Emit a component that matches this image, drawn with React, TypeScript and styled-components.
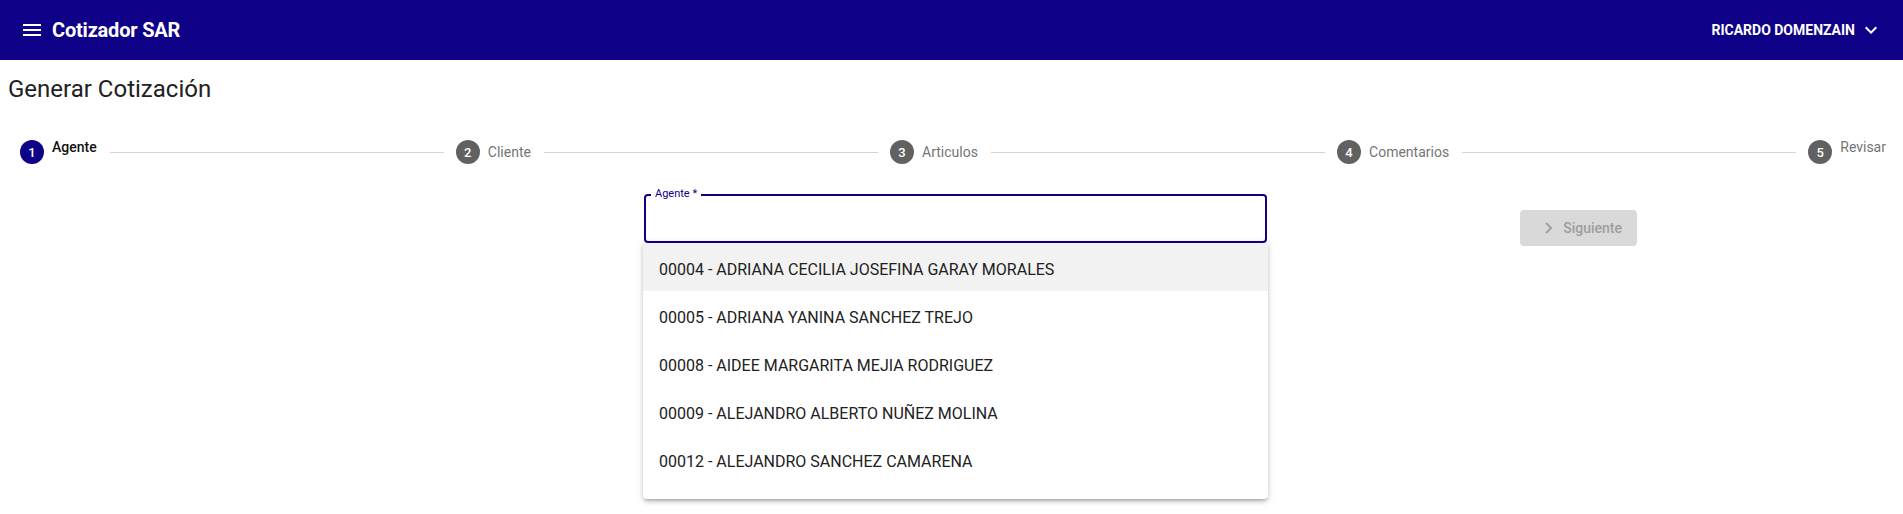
import React from 'react';
import styled, { createGlobalStyle } from 'styled-components';

const NAVY = '#0e0087';

const GlobalStyle = createGlobalStyle`
  html, body {
    margin: 0;
    padding: 0;
    background: #ffffff;
    font-family: Roboto, "Liberation Sans", Arial, sans-serif;
  }
  #root {
    min-height: 100vh;
  }
`;

interface StepData {
  number: number;
  label: string;
  active?: boolean;
  raised?: boolean;
}

const steps: StepData[] = [
  { number: 1, label: 'Agente', active: true, raised: true },
  { number: 2, label: 'Cliente' },
  { number: 3, label: 'Articulos' },
  { number: 4, label: 'Comentarios' },
  { number: 5, label: 'Revisar', raised: true },
];

const agentes = [
  '00004 - ADRIANA CECILIA JOSEFINA GARAY MORALES',
  '00005 - ADRIANA YANINA SANCHEZ TREJO',
  '00008 - AIDEE MARGARITA MEJIA RODRIGUEZ',
  '00009 - ALEJANDRO ALBERTO NUÑEZ MOLINA',
  '00012 - ALEJANDRO SANCHEZ CAMARENA',
];

const AppBar = styled.header`
  height: 60px;
  background: ${NAVY};
  color: #ffffff;
  display: flex;
  align-items: center;
  justify-content: space-between;
  padding: 0 20px;
`;

const Brand = styled.div`
  display: flex;
  align-items: center;
  gap: 8px;
`;

const BrandTitle = styled.span`
  font-size: 20px;
  font-weight: 700;
  letter-spacing: -0.2px;
`;

const UserMenu = styled.div`
  display: flex;
  align-items: center;
  gap: 4px;
  font-size: 14px;
  font-weight: 700;
  text-transform: uppercase;
`;

const Main = styled.main`
  padding: 0 4px 0 8px;
`;

const PageTitle = styled.h1`
  margin: 13px 0 0;
  font-size: 24px;
  line-height: 32px;
  font-weight: 400;
  color: #212121;
`;

const Stepper = styled.div`
  display: flex;
  align-items: center;
  margin-top: 35px;
  height: 24px;
`;

const Step = styled.div`
  display: flex;
  align-items: center;
  gap: 8px;
  height: 24px;
  padding: 0 13px 0 12px;
`;

const StepIcon = styled.span<{ $active?: boolean }>`
  width: 24px;
  height: 24px;
  border-radius: 50%;
  background: ${(p) => (p.$active ? NAVY : '#616161')};
  color: #ffffff;
  font-size: 13px;
  font-weight: 500;
  display: flex;
  align-items: center;
  justify-content: center;
  flex-shrink: 0;
`;

const StepLabel = styled.span<{ $active?: boolean; $raised?: boolean }>`
  font-size: 14px;
  line-height: ${(p) => (p.$raised ? '14px' : '20px')};
  align-self: ${(p) => (p.$raised ? 'flex-start' : 'center')};
  font-weight: ${(p) => (p.$active ? 500 : 400)};
  color: ${(p) => (p.$active ? '#111111' : '#757575')};
  white-space: nowrap;
`;

const Connector = styled.span`
  flex: 1;
  height: 1px;
  background: #d4d4d4;
`;

const FormRow = styled.div`
  display: grid;
  grid-template-columns: 636px 623px 253px 117px;
  align-items: start;
  margin-top: 30px;
`;

const Field = styled.div`
  grid-column: 2;
  position: relative;
  display: flex;
  flex-direction: column;
`;

const InputBox = styled.div`
  height: 49px;
  box-sizing: border-box;
  border: 2px solid ${NAVY};
  border-radius: 4px;
`;

const FloatingLabel = styled.span`
  position: absolute;
  top: -6px;
  left: 7px;
  padding: 0 4px;
  background: #ffffff;
  font-size: 11px;
  line-height: 12px;
  color: ${NAVY};
`;

const Listbox = styled.div`
  margin: 0 -1px;
  height: 256px;
  box-sizing: border-box;
  padding: 0 0 16px;
  background: #ffffff;
  border-radius: 0 0 4px 4px;
  box-shadow: 0 3px 3px -2px rgba(0, 0, 0, 0.2), 0 3px 4px 0 rgba(0, 0, 0, 0.14),
    0 1px 8px 0 rgba(0, 0, 0, 0.12);
`;

const Option = styled.div<{ $focused?: boolean }>`
  height: 48px;
  box-sizing: border-box;
  padding: 6px 16px 0;
  line-height: 42px;
  font-size: 16px;
  color: #212121;
  background: ${(p) => (p.$focused ? '#f2f2f2' : 'transparent')};
`;

const NextButton = styled.button`
  grid-column: 4;
  margin-top: 16px;
  height: 36px;
  display: flex;
  align-items: center;
  gap: 3px;
  padding: 0 15px 0 17px;
  border: none;
  border-radius: 4px;
  background: #d9d9d9;
  color: #9e9e9e;
  font-family: inherit;
  font-size: 14px;
  font-weight: 500;
  cursor: default;
`;

function MenuIcon() {
  return (
    <svg width="24" height="24" viewBox="0 0 24 24" fill="#ffffff">
      <path d="M3 18h18v-2H3v2zm0-5h18v-2H3v2zm0-7v2h18V6H3z" />
    </svg>
  );
}

function ExpandMoreIcon() {
  return (
    <svg width="24" height="24" viewBox="0 0 24 24" fill="#ffffff">
      <path d="M16.59 8.59L12 13.17 7.41 8.59 6 10l6 6 6-6z" />
    </svg>
  );
}

function ChevronRightIcon() {
  return (
    <svg width="24" height="24" viewBox="0 0 24 24" fill="#9e9e9e">
      <path d="M10 6L8.59 7.41 13.17 12l-4.58 4.59L10 18l6-6z" />
    </svg>
  );
}

export default function App() {
  return (
    <>
      <GlobalStyle />
      <AppBar>
        <Brand>
          <MenuIcon />
          <BrandTitle>Cotizador SAR</BrandTitle>
        </Brand>
        <UserMenu>
          Ricardo Domenzain
          <ExpandMoreIcon />
        </UserMenu>
      </AppBar>

      <Main>
        <PageTitle>Generar Cotización</PageTitle>

        <Stepper>
          {steps.map((step, i) => (
            <React.Fragment key={step.number}>
              {i > 0 && <Connector />}
              <Step>
                <StepIcon $active={step.active}>{step.number}</StepIcon>
                <StepLabel $active={step.active} $raised={step.raised}>
                  {step.label}
                </StepLabel>
              </Step>
            </React.Fragment>
          ))}
        </Stepper>

        <FormRow>
          <Field>
            <FloatingLabel>Agente *</FloatingLabel>
            <InputBox />
            <Listbox role="listbox">
              {agentes.map((a, i) => (
                <Option key={a} role="option" $focused={i === 0}>
                  {a}
                </Option>
              ))}
            </Listbox>
          </Field>
          <NextButton disabled>
            <ChevronRightIcon />
            Siguiente
          </NextButton>
        </FormRow>
      </Main>
    </>
  );
}
